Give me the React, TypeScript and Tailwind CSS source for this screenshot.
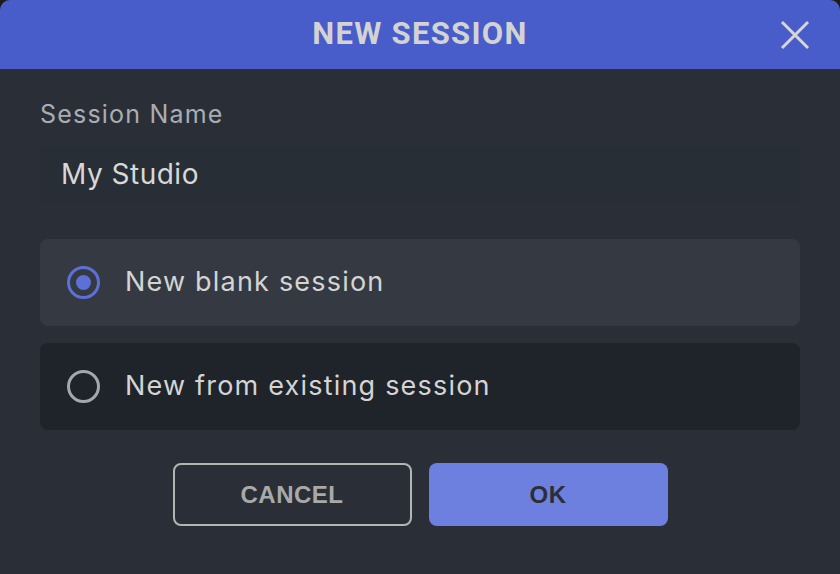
import React, { useState } from "react";

const sans = { fontFamily: "Inter, 'Noto Sans', sans-serif" };

const Radio = ({ checked }: { checked: boolean }) =>
  checked ? (
    <span className="flex items-center justify-center w-[33px] h-[33px] rounded-full border-[3px] border-[#5c70d8]">
      <span className="w-[15px] h-[15px] rounded-full bg-[#5c70d8]" />
    </span>
  ) : (
    <span className="w-[33px] h-[33px] rounded-full border-[3px] border-[#a5a7aa]" />
  );

const NewSessionDialog = () => {
  const [mode, setMode] = useState("blank");

  const options = [
    { id: "blank", label: "New blank session" },
    { id: "existing", label: "New from existing session" },
  ];

  return (
    <div className="w-[840px] h-[574px] bg-[#1c1c16] overflow-hidden">
      <div className="flex flex-col w-full h-full bg-[#2a2f37] rounded-t-[10px] overflow-hidden">
        {/* cabecera */}
        <div className="relative flex items-center justify-center h-[69px] bg-[#485dc9] shrink-0">
          <span
            className="text-[31px] font-bold text-[#d3d3d3] tracking-[1.3px]"
            style={{ fontFamily: "Roboto, 'Liberation Sans', sans-serif" }}
          >
            NEW SESSION
          </span>
          <button className="absolute right-[29px] top-[19px] text-[#d6d6d6]">
            <svg width="32" height="32" viewBox="0 0 32 32" fill="none">
              <path d="M3 3 L29 29 M29 3 L3 29" stroke="currentColor" strokeWidth="3" />
            </svg>
          </button>
        </div>

        <div className="flex flex-col px-10 pt-[30px]" style={sans}>
          <label className="text-[25px] leading-[30px] text-[#a9adb3] tracking-[1.2px]">Session Name</label>
          <input
            defaultValue="My Studio"
            className="mt-[16px] h-[58px] px-[21px] bg-[#282e36] text-[28px] text-[#d8d8d8] tracking-[0.5px] outline-none"
            style={sans}
          />

          <div className="flex flex-col gap-[17px] mt-[36px]">
            {options.map((opt) => (
              <div
                key={opt.id}
                onClick={() => setMode(opt.id)}
                className={`flex items-center gap-[25px] h-[87px] px-[27px] rounded-lg cursor-pointer ${
                  mode === opt.id ? "bg-[#353a42]" : "bg-[#1f232a]"
                }`}
              >
                <Radio checked={mode === opt.id} />
                <span className="text-[27px] text-[#d4d4d4] tracking-[1.2px]">{opt.label}</span>
              </div>
            ))}
          </div>

          <div
            className="flex justify-center gap-[17px] mt-[33px]"
            style={{ fontFamily: "'Liberation Sans', Arial, sans-serif" }}
          >
            <button className="w-[239px] h-[63px] rounded-lg border-2 border-[#b4b4b4] text-[24px] font-bold text-[#a9a9a9] tracking-[0.5px]">
              CANCEL
            </button>
            <button className="w-[239px] h-[63px] rounded-lg bg-[#6d80e0] text-[24px] font-bold text-[#2a2f37] tracking-[0.5px]">
              OK
            </button>
          </div>
        </div>
      </div>
    </div>
  );
};

export default NewSessionDialog;
